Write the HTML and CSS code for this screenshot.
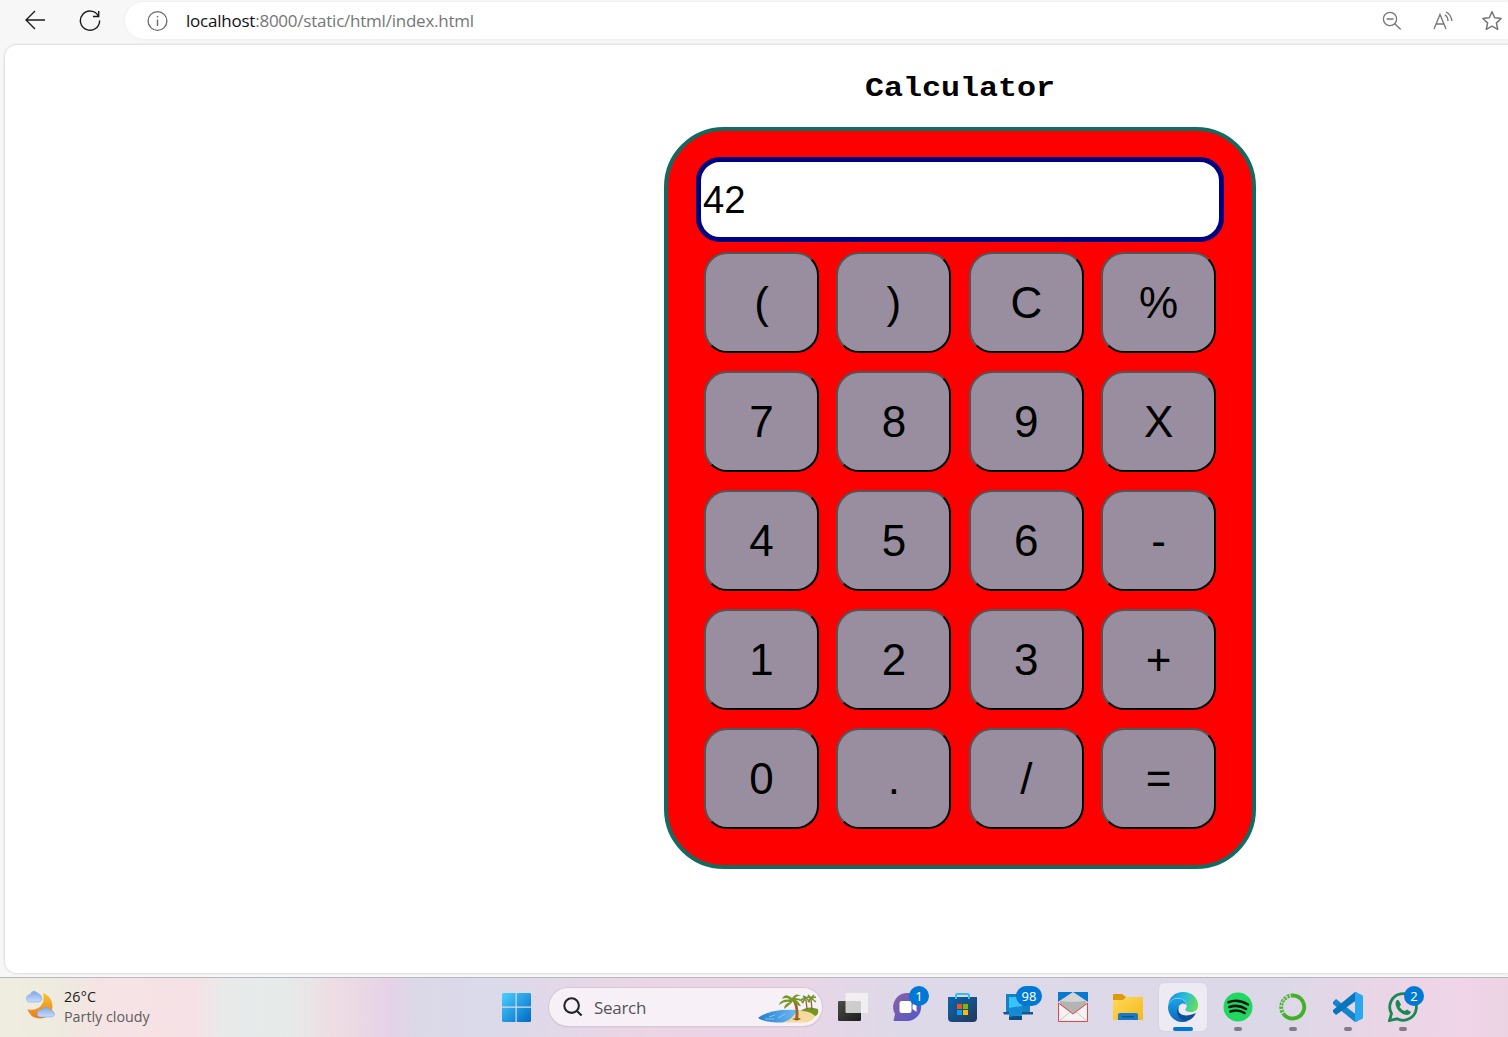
FILE: index.html
```html
<!DOCTYPE html>
<html lang="en">
<head>
<meta charset="utf-8">
<title>Calculator</title>
<link rel="stylesheet" href="styles.css">
</head>
<body>
<header class="toolbar">
  <svg class="nav-back" width="22" height="20" viewBox="0 0 22 20"><path d="M11 1 L2 10 L11 19 M2 10 H21" fill="none" stroke="#1b1b1b" stroke-width="1.4"/></svg>
  <svg class="nav-reload" width="22" height="22" viewBox="0 0 22 22"><path d="M19.4 6 A9.6 9.6 0 1 0 20.6 10.5 M19.7 1 V6.5 H14" fill="none" stroke="#1b1b1b" stroke-width="1.4"/></svg>
  <div class="address">
    <svg width="22" height="22" viewBox="0 0 22 22"><circle cx="11.500" cy="11" r="9.4" fill="none" stroke="#6a6a6a" stroke-width="1.3"/><path d="M11.500 9.5V16M11.500 6V7.6" stroke="#6a6a6a" stroke-width="1.4"/></svg>
    <span class="url"><span class="host">localhost</span>:8000/static/html/index.html</span>
    <svg class="tool-zoom" width="20" height="20" viewBox="0 0 20 20" fill="none" stroke="#757575" stroke-width="1.3"><circle cx="8" cy="8" r="6.6"/><path d="M4.5 8H11.5M12.8 12.8L18.7 18.5"/></svg>
    <svg class="tool-read" width="20" height="20" viewBox="0 0 20 20" fill="none" stroke="#757575" stroke-width="1.3"><path d="M1 18L7 3.5L13 18M3.2 13H10.8M12 3.8Q14.800 5.8 15 10M13 1Q18.2 3.5 18.9 10"/></svg>
    <svg class="tool-star" width="22" height="22" viewBox="0 0 22 22"><path d="M11 1.8L13.7 7.7L20.2 8.5L15.4 12.9L16.7 19.4L11 16.2L5.3 19.4L6.6 12.9L1.8 8.5L8.3 7.7Z" fill="none" stroke="#757575" stroke-width="1.5" stroke-linejoin="round"/></svg>
  </div>
</header>
<div class="viewport">
  <main class="page">
    <h1 class="title">Calculator</h1>
    <section class="calculator">
      <input class="screen" type="text" value="42" aria-label="Display">
      <div class="keys">
        <button class="key">(</button><button class="key">)</button><button class="key">C</button><button class="key">%</button>
        <button class="key">7</button><button class="key">8</button><button class="key">9</button><button class="key">X</button>
        <button class="key">4</button><button class="key">5</button><button class="key">6</button><button class="key">-</button>
        <button class="key">1</button><button class="key">2</button><button class="key">3</button><button class="key">+</button>
        <button class="key">0</button><button class="key">.</button><button class="key">/</button><button class="key">=</button>
      </div>
    </section>
  </main>
</div>
<footer class="taskbar">
  <div class="weather">
    <svg width="32" height="30" viewBox="0 0 32 30">
      <defs>
        <linearGradient id="moon" x1="0" y1="0" x2="0" y2="1"><stop offset="0" stop-color="#f7c52c"/><stop offset="1" stop-color="#ee7820"/></linearGradient>
        <linearGradient id="cloud" x1="0" y1="0" x2="0" y2="1"><stop offset="0" stop-color="#82a6e8"/><stop offset="1" stop-color="#c9dcfb"/></linearGradient>
      </defs>
      <path d="M19 3C33 8 31 28 16 28.6C9 28.4 5 24 3.500 19.200C14 22 22 15 19 3Z" fill="url(#moon)"/>
      <path d="M4.500 12A4 4 0 0 1 4.500 5Q6 5 6.500 4Q9 -1 13.500 3Q18 5 18 9Q17 12 14 12Z" fill="url(#cloud)" stroke="#83a5df" stroke-width=".6"/>
      <path d="M16 27A3.500 3.500 0 0 1 17.500 20Q21 14.500 25.500 19.500Q30.500 21 30.500 24Q30 27 27 27Z" fill="url(#cloud)" stroke="#83a5df" stroke-width=".6"/>
    </svg>
    <div class="weather-text"><div class="temp">26°C</div><div class="sky">Partly cloudy</div></div>
  </div>
  <div class="app">
    <svg width="30" height="30" viewBox="0 0 30 30"><defs><linearGradient id="win" x1="0" y1="0" x2="1" y2="1"><stop offset="0" stop-color="#4bd0fb"/><stop offset="1" stop-color="#0069c8"/></linearGradient></defs><path d="M1 1H13.500V14.500H0V2ZM14.700 1H28L29 2V14.500H14.700ZM0 15.700H13.500V30H1L0 29ZM14.700 15.700H29V29L28 30H14.700Z" fill="url(#win)"/></svg>
  </div>
  <div class="search">
    <svg width="20" height="20" viewBox="0 0 20 20" fill="none" stroke="#252328" stroke-width="2.1"><circle cx="8.600" cy="8.600" r="7.300"/><path d="M13.700 13.700L18.600 18.600"/></svg>
    <span class="search-label">Search</span>
    <svg class="beach" width="62" height="30" viewBox="0 0 62 30">
      <defs><linearGradient id="sea" x1="0" y1="0" x2="1" y2="0"><stop offset="0" stop-color="#257fce"/><stop offset="1" stop-color="#75c1fa"/></linearGradient></defs>
      <path d="M1 25Q13 15 42 17L45 24L26 29.500Q8 29.500 1 25Z" fill="url(#sea)"/>
      <path d="M25 29.500C38 27 36 17 47 16.500Q60 16 60 20Q57 28 49 29.500Z" fill="#f5daa0"/>
      <path d="M44 18Q50 12 61 16Q62 22 58 23Q53 18 44 18Z" fill="#719622"/>
      <path d="M35 26Q42 24 44 26L40 27.500Z" fill="#805728"/>
      <path d="M38 26Q40 14 35 7L38 6Q43 16 41 26Z" fill="#9b6326"/>
      <path d="M50 16L49 7M55 17L54 6" stroke="#85662c" stroke-width="1.300"/>
      <path d="M35 5Q28 -1 25 6Q29 4 33 6.500Q23 6 22 12Q27 8 33 9Q27 11 27 16Q34 11 36 8Q40 13 44 13Q41 8 39 7Q44 7 47 11Q46 5 38 5Q41 2 44 3Q39 -1 35 5Z" fill="#769827"/>
      <path d="M44 7L49 4M49 5L45 10M49 5L53 9M50 4L54 5M50 5L46 3M54 5L51 9M54 5L59 9M54 5L59 4M54 5L51 2M54 5L57 2" stroke="#73902c" stroke-width="1.500"/>
      <path d="M12 24L18 22M21 25L28 21M8 26H17" stroke="#b9e2ff" stroke-width=".6"/>
    </svg>
  </div>
  <div class="app">
    <svg width="30" height="30" viewBox="0 0 30 30"><defs><linearGradient id="tv" x1="0" y1="0" x2="1" y2="1"><stop offset="0" stop-color="#4c4c49"/><stop offset="1" stop-color="#1c1c1b"/></linearGradient></defs><rect x="0" y="9" width="23" height="20" rx="1.200" fill="url(#tv)"/><path d="M7.500 2Q7.500 1 8.500 1H29Q30 1 30 2V20Q30 21 29 21H8.500Q7.500 21 7.500 20Z" fill="#f5f4f5" fill-opacity=".8"/></svg>
  </div>
  <div class="app">
    <svg width="30" height="30" viewBox="0 0 30 30"><defs><linearGradient id="chat" x1="0" y1="0" x2="1" y2="1"><stop offset="0" stop-color="#8c60a5"/><stop offset="1" stop-color="#5059c9"/></linearGradient></defs><path d="M.5 29L2 22A14 14 0 1 1 14 29Z" fill="url(#chat)"/><rect x="6.500" y="9" width="12" height="12" rx="2" fill="#fff"/><path d="M19.500 13L23.500 10V20L19.500 17Z" fill="#fff"/></svg>
    <span class="badge">1</span>
  </div>
  <div class="app">
    <svg width="30" height="30" viewBox="0 0 30 30"><defs><linearGradient id="store" x1="0" y1="0" x2="1" y2="1"><stop offset="0" stop-color="#0967af"/><stop offset="1" stop-color="#253759"/></linearGradient></defs><path d="M0 5H29V26Q29 30 25 30H4Q0 30 0 26Z" fill="url(#store)"/><path d="M8 7V3Q8 2 9.500 2H19.500Q21 2 21 3V7" fill="none" stroke="#35bdf3" stroke-width="2"/><path d="M9 12H14V17H9Z" fill="#f25022"/><path d="M15 12H20V17H15Z" fill="#7fba00"/><path d="M9 18H14V23H9Z" fill="#00a4ef"/><path d="M15 18H20V23H15Z" fill="#ffb900"/></svg>
  </div>
  <div class="app">
    <svg width="30" height="30" viewBox="0 0 30 30"><rect x="3" y="2" width="24" height="19" fill="#1681c5"/><path d="M0 20H30V22.500H1Z" fill="#13578f"/><rect x="6" y="5" width="13" height="22" fill="#20a2df"/><path d="M6 5H14L19 9V16H6Z" fill="#36c3f6"/><rect x="6" y="24" width="13" height="4" fill="#0c4d83"/><path d="M6 16L19 14V23L6 25Z" fill="#1788d2"/></svg>
    <span class="badge wide">98</span>
  </div>
  <div class="app">
    <svg width="30" height="30" viewBox="0 0 30 30"><rect width="30" height="15" fill="#0878d1"/><path d="M0 10L15 0L30 10V30H0Z" fill="#e8e8e8"/><path d="M2 9L15 1L28 9V13L15 22L2 13Z" fill="#b4b4b4"/><path d="M15 1L28 9L15 10L2 9Z" fill="#d5d5d5"/><path d="M1 12L15 22L29 12V29H1Z" fill="#f3f3f3"/><path d="M2 28L12 20M28 28L18 20" stroke="#c8c8c8" stroke-width="1"/><path d="M.5 11L15 22L29.500 11V29.500H.5Z" fill="none" stroke="#e74248" stroke-width="1"/></svg>
  </div>
  <div class="app">
    <svg width="30" height="30" viewBox="0 0 30 30"><defs><linearGradient id="folder" x1="0" y1="0" x2="1" y2="1"><stop offset="0" stop-color="#ffd95d"/><stop offset="1" stop-color="#f6b817"/></linearGradient></defs><path d="M0 3Q0 2 1 2H9L13 5H18V12H0Z" fill="#dc9b0c"/><path d="M0 8H10L13 5H29Q30 5 30 6V27Q30 28 29 28H1Q0 28 0 27Z" fill="url(#folder)"/><path d="M5 28V23Q5 21 7 21H23Q25 21 25 23V28Z" fill="#1879c7"/><path d="M9 24.800H21" stroke="#0b4b83" stroke-width="1.200"/></svg>
  </div>
  <div class="app active">
    <svg width="30" height="30" viewBox="0 0 30 30"><defs><linearGradient id="edge-top" x1="0" y1=".3" x2="1" y2=".6"><stop offset="0" stop-color="#1990dc"/><stop offset=".5" stop-color="#28bddb"/><stop offset="1" stop-color="#68df50"/></linearGradient><linearGradient id="edge-side" x1="0" y1="0" x2="0" y2="1"><stop offset="0" stop-color="#1ba3e6"/><stop offset="1" stop-color="#0968be"/></linearGradient></defs>
    <path d="M0 14C1 5 7 0 15 0C25 0 30 7 30 13C30 18 27 20 23 20C18 20 16 18 18 16C20 12 16 6 10 6C5 6 1 9 0 14Z" fill="url(#edge-top)"/><path d="M0 15C1 9 5 6.500 10 6.500C15 6.500 18 10 18 13Q14 10 11 14C8 19 12 28 20 29C9 33 0 25 0 15Z" fill="url(#edge-side)"/><path d="M11 14C8 23 17 26 28 21Q24 29 17 29C10 28 7 20 11 14Z" fill="#104f97"/><path d="M14 11.800Q18.500 11 18.500 15Q16 18 18 20Q12 20 12 15Q12 13 14 11.800Z" fill="#edeaf3"/></svg>
    <span class="running"></span>
  </div>
  <div class="app">
    <svg width="30" height="30" viewBox="0 0 30 30"><circle cx="15" cy="15" r="14.500" fill="#20d760"/><path d="M5.500 10.200Q15 6.500 25 12.500M6.500 15Q15 12 23 17M7.500 19.500Q15 17 21.500 21" fill="none" stroke="#101512" stroke-width="2.600" stroke-linecap="round"/></svg>
    <span class="running"></span>
  </div>
  <div class="app">
    <svg width="30" height="30" viewBox="0 0 30 30" fill="none" stroke="#43b02a"><path d="M15 3.500A11.500 11.500 0 1 1 6 22.500" stroke-width="3.800"/><path d="M15 3.500A11.500 11.500 0 0 0 6 22.500" stroke-width="3.800" stroke-dasharray="2.500 1"/><path d="M13 3.500A11.500 11.500 0 0 0 5 21" stroke="#dbeed6" stroke-width="1" stroke-dasharray="1.500 1.500"/></svg>
    <span class="running"></span>
  </div>
  <div class="app">
    <svg width="30" height="30" viewBox="0 0 30 30"><path d="M0 10L3 7L25 24V29L22 30L0 12Z" fill="#1684ca"/><path d="M0 18L22 0L25 1V7L3 23L0 20Z" fill="#0875bd"/><path d="M22 0L29 3Q30 3.500 30 4.500V25.500Q30 26.500 29 27L22 30Z" fill="#29a7f3"/></svg>
    <span class="running"></span>
  </div>
  <div class="app">
    <svg width="30" height="30" viewBox="0 0 30 30"><path d="M1.500 28.500L3.500 21.500A13.300 13.300 0 1 1 9 26.800Z" fill="none" stroke="#178955" stroke-width="2.800"/><path d="M10.500 8L13 12.500L11.500 15Q14 18.500 17 19L19 17.500L23 20Q22 23 18.500 23Q9 21 7.500 12Q7.500 9 9 8Z" fill="#178955"/></svg>
    <span class="badge">2</span>
    <span class="running"></span>
  </div>
</footer>
</body>
</html>
```
FILE: styles.css
```css
* { box-sizing: border-box; }
body {
  margin: 0;
  height: 1037px;
  display: flex;
  flex-direction: column;
  overflow: hidden;
  background: #f7f7f7;
  font-family: "Noto Sans", sans-serif;
}
svg { display: block; flex: none; }

.toolbar {
  height: 45px;
  flex: none;
  display: flex;
  align-items: flex-start;
  padding-left: 23.5px;
}
.nav-back { margin-top: 10px; }
.nav-reload { margin: 10px 0 0 33px; }
.address {
  flex: 1;
  height: 37px;
  margin: 2px 0 0 24.5px;
  padding: 0 5px 0 21px;
  display: flex;
  align-items: center;
  background: #fff;
  border-radius: 19px 0 0 19px;
  box-shadow: 0 0 3px #e6e6e6;
}
.url {
  margin: -1px auto 0 18px;
  font-family: "Open Sans", sans-serif;
  font-size: 17px;
  letter-spacing: -0.23px;
  color: #767676;
  white-space: nowrap;
}
.host { color: #111; }
.tool-read { margin-left: 31px; }
.tool-star { margin-left: 28px; }

.viewport {
  height: 928px;
  flex: none;
  margin: 0 0 4px 5px;
  overflow: hidden;
  background: #fff;
  border-radius: 12px 0 0 12px;
  box-shadow: 0 0 2px 1px #dedede;
}
/* The document is wider than the visible part of the window. */
.page {
  width: 1910px;
  display: flex;
  flex-direction: column;
  align-items: center;
}
/* Slightly flattened letters, as in Courier New. */
.title {
  margin: 25px 0 21px;
  font: bold 31.7px/36px "Liberation Mono", monospace;
  color: #000;
  transform: scaleY(.89);
  transform-origin: 50% 76%;
}
.calculator {
  width: 592px;
  height: 742px;
  padding: 26px 28px;
  background: #f00;
  border: 4px solid #136a61;
  border-radius: 60px;
}
.screen {
  display: block;
  width: 528px;
  height: 85px;
  padding: 0 2px;
  border: 5px solid #000080;
  border-radius: 24px;
  background: #fff;
  color: #000;
  font: 38.3px "Liberation Sans", sans-serif;
}
.keys {
  display: grid;
  grid-template-columns: repeat(4, 115px);
  grid-auto-rows: 101px;
  gap: 18px 17.4px;
  margin: 10px 0 0 8px;
}
.key {
  padding: 0;
  border: 2px outset #000;
  border-radius: 23px;
  background: #988e9f;
  color: #000;
  font: 44px "Liberation Sans", sans-serif;
}

.taskbar {
  height: 60px;
  flex: none;
  display: grid;
  grid-template-columns: 489px 55px 281px repeat(11, 55px);
  border-top: 1px solid #b8b6be;
  background: linear-gradient(90deg, #eeeee0 0, #eeeadf 60px, #f6e3e5 105px, #f6e2e6 195px, #e8eaea 225px, #e6ebea 285px, #eedde3 335px, #e6d2e8 390px, #dcd8e8 415px, #dadaea 490px, #ecd5e5 650px, #ead5e6 780px, #ddd9e8 910px, #dcd8e7 1280px, #ead5e6 1390px, #efd5e7 1460px, #ecd3e4 1508px);
}
.weather {
  display: flex;
  padding: 12px 0 0 24px;
}
.weather-text {
  margin: -3px 0 0 8px;
  font-family: "Open Sans", sans-serif;
  font-size: 14.3px;
  line-height: 20px;
}
.temp { color: #1b1b1b; letter-spacing: 0.2px; }
.sky { color: #605b5d; }
.app {
  position: relative;
  display: flex;
  align-items: center;
  justify-content: center;
  height: 58px;
}
.active::before {
  content: "";
  position: absolute;
  inset: 5px 3px 5px 4px;
  border-radius: 5px;
  background: #edeaf3;
  box-shadow: 0 0 1px #bdb9c6;
}
.active svg { position: relative; }
.badge {
  position: absolute;
  top: 8px;
  left: 29px;
  min-width: 20px;
  height: 20px;
  padding: 0 5px;
  border-radius: 10px;
  background: #0078d4;
  color: #fff;
  font-size: 13px;
  line-height: 20px;
  text-align: center;
}
.badge.wide { left: 26px; width: 26px; }
.running {
  position: absolute;
  left: 24px;
  bottom: 5px;
  width: 8px;
  height: 4px;
  border-radius: 2px;
  background: #817b87;
}
.active .running { left: 18px; width: 20px; background: #0078d4; }
.search {
  width: 273px;
  height: 38px;
  margin: 10px 0 0 5px;
  padding: 0 3px 0 14px;
  display: flex;
  align-items: center;
  border-radius: 19px;
  background: #f7f1f7;
  box-shadow: 0 0 0 1px #d5c7d8, 0 1px 1px #aea2b4;
}
.search-label {
  margin: 0 auto 0 11px;
  font-family: "Open Sans", sans-serif;
  font-size: 17px;
  letter-spacing: -0.3px;
  color: #55515a;
}
.beach { margin-top: 2px; }
```
